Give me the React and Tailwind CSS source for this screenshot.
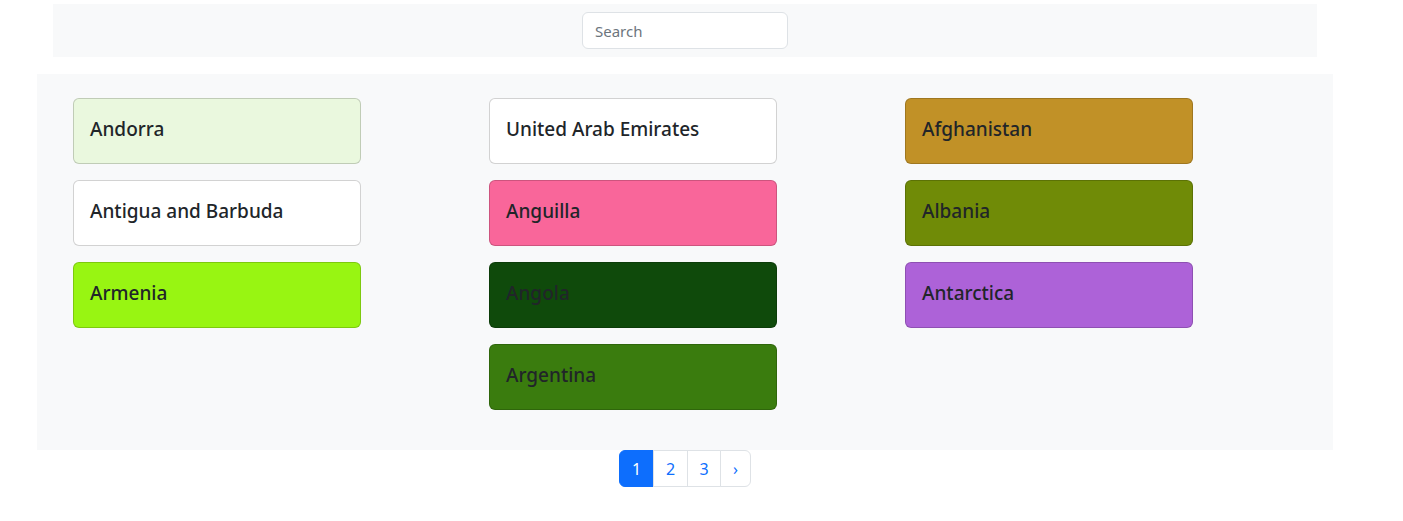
import { useState } from 'react'

const columns = [
  [
    { name: 'Andorra', bg: 'bg-[#eaf8de]' },
    { name: 'Antigua and Barbuda', bg: 'bg-white' },
    { name: 'Armenia', bg: 'bg-[#98f512]' },
  ],
  [
    { name: 'United Arab Emirates', bg: 'bg-white' },
    { name: 'Anguilla', bg: 'bg-[#f9669a]' },
    { name: 'Angola', bg: 'bg-[#0f4a0b]' },
    { name: 'Argentina', bg: 'bg-[#3a7c0e]' },
  ],
  [
    { name: 'Afghanistan', bg: 'bg-[#c19127]' },
    { name: 'Albania', bg: 'bg-[#708b07]' },
    { name: 'Antarctica', bg: 'bg-[#ad62d8]' },
  ],
]

function CountryCard({ name, bg }) {
  return (
    <div className={`w-[288px] h-[66px] mb-4 rounded-[6px] border border-black/[0.175] px-4 pb-[5px] flex items-center ${bg}`}>
      <h5 className="text-[19px] leading-[24px] font-medium text-[#212529]">{name}</h5>
    </div>
  )
}

export default function App() {
  const [query, setQuery] = useState('')
  const [page, setPage] = useState(1)

  return (
    <div className="min-h-[521px] bg-white font-['Segoe_UI','Noto_Sans',sans-serif] text-[#212529]">
      <div className="pt-1 px-[53px] w-[1370px]">
        <div className="bg-[#f8f9fa] py-2 flex justify-center">
          <input
            value={query}
            onChange={(e) => setQuery(e.target.value)}
            placeholder="Search"
            className="w-[206px] h-[37px] px-3 rounded-[6px] border border-[#dee2e6] bg-white text-[15px] placeholder:text-[#6c757d] outline-none"
          />
        </div>
      </div>

      <div className="mt-[17px] ml-[37px] w-[1296px] bg-[#f8f9fa] pt-6 pb-[24px] pl-9 grid grid-cols-[repeat(3,416px)]">
        {columns.map((col, i) => (
          <div key={i}>
            {col.map((c) => (
              <CountryCard key={c.name} {...c} />
            ))}
          </div>
        ))}
      </div>

      <div className="w-[1370px] flex justify-center">
        <div className="flex h-[37px] text-[16px]">
          {[1, 2, 3].map((n) => (
            <button
              key={n}
              onClick={() => setPage(n)}
              className={`${n === 3 ? 'w-[34px]' : 'w-[35px]'} -ml-px first:ml-0 flex items-center justify-center border first:rounded-l-[6px] ${
                page === n
                  ? 'bg-[#0d6efd] border-[#0d6efd] text-white'
                  : 'bg-white border-[#dee2e6] text-[#0d6efd]'
              }`}
            >
              {n}
            </button>
          ))}
          <button className="w-[31px] -ml-px flex items-center justify-center border border-[#dee2e6] rounded-r-[6px] bg-white text-[#0d6efd]">
            ›
          </button>
        </div>
      </div>
    </div>
  )
}
